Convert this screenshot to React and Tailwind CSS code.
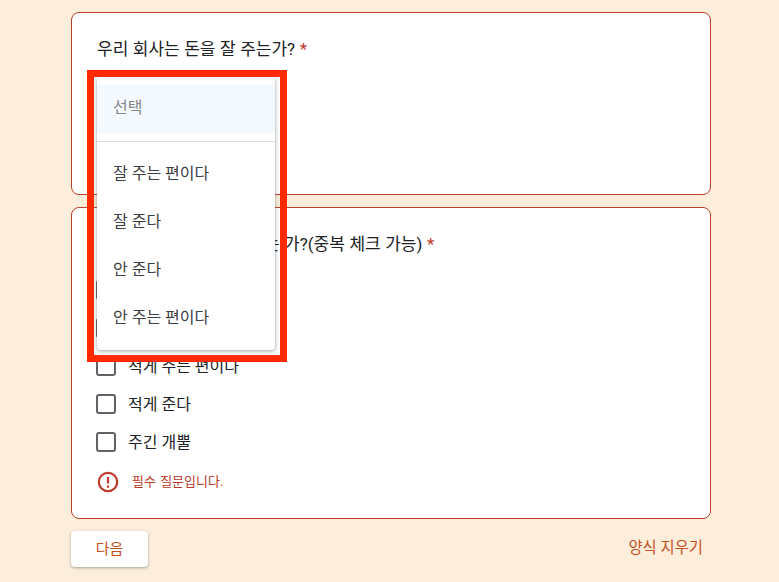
const font = { fontFamily: '"Roboto", "Noto Sans CJK KR", sans-serif' };

function Check({ label }) {
  return (
    <div className="flex h-[38px] items-center gap-[12px]">
      <span className="h-[20px] w-[20px] rounded-[3px] border-2 border-[#5f6368]" />
      <span className="pt-[1px] text-[16px] text-[#202124]">{label}</span>
    </div>
  );
}

function MenuItem({ children }) {
  return <div className="flex h-[48px] items-center px-[16px] pt-[1px] text-[16px] text-[#3c4043]">{children}</div>;
}

export default function App() {
  return (
    <div className="relative h-[582px] w-[779px] overflow-hidden bg-[#fdeedb]" style={font}>
      <div className="ml-[71px] flex w-[640px] flex-col pt-[12px]">
        <section className="h-[183px] rounded-[8px] border border-[#bd3f2c] bg-white pl-[25px] pt-[24px]">
          <h2 className="text-[17px] leading-[24px] font-normal text-[#202124] [word-spacing:0.3px]">
            우리 회사는 돈을 잘 주는가? <span className="text-[#c0392b]">*</span>
          </h2>
        </section>
        <section className="mt-[12px] h-[312px] rounded-[8px] border border-[#bd3f2c] bg-white pl-[24px] pt-[24px]">
          <h2 className="pl-[1px] text-[17px] leading-[24px] font-normal text-[#202124] [word-spacing:0.3px]">
            <span className="[word-spacing:3px]">우리 회사는 돈을 잘</span> 주는 가?(중복 체크 가능) <span className="text-[#c0392b]">*</span>
          </h2>
          <div className="mt-[15px] flex flex-col">
            <Check label="많이 준다" />
            <Check label="많이 주는 편이다" />
            <Check label="적게 주는 편이다" />
            <Check label="적게 준다" />
            <Check label="주긴 개뿔" />
          </div>
          <div className="mt-[10px] flex items-center gap-[13px] pl-[1px] text-[13px] text-[#b83a2b] [word-spacing:1px]">
            <svg width="22" height="22" viewBox="0 0 22 22" fill="none" aria-hidden="true">
              <circle cx="11" cy="11" r="9.2" stroke="#c0392b" strokeWidth="2.2" />
              <path d="M11 6v6.5" stroke="#c0392b" strokeWidth="2.2" />
              <path d="M11 14.5v2.2" stroke="#c0392b" strokeWidth="2.2" />
            </svg>
            <span>필수 질문입니다.</span>
          </div>
        </section>
        <div className="mt-[12px] flex items-center justify-between">
          <button className="h-[36px] w-[77px] rounded-[4px] bg-white text-[15px] text-[#c5501f] shadow-[0_1px_3px_rgba(60,64,67,0.45)]">
            다음
          </button>
          <span className="pr-[8px] text-[15.4px] text-[#c5501f]">양식 지우기</span>
        </div>
      </div>

      <div className="absolute left-[87px] top-[70px] h-[292px] w-[200px] border-[7px] border-[#ff2a00]">
        <div className="ml-[3px] h-[273px] w-[178px] rounded-[4px] bg-white shadow-[0_1px_4px_rgba(60,64,67,0.5)]">
          <div className="pt-[8px]">
            <div className="flex h-[48px] items-center bg-[#f4f9fd] px-[16px] pb-[3px] text-[16px] text-[#80868b]">선택</div>
          </div>
          <div className="mt-[8px] border-t border-[#dadce0] pt-[7px]">
            <MenuItem>잘 주는 편이다</MenuItem>
            <MenuItem>잘 준다</MenuItem>
            <MenuItem>안 준다</MenuItem>
            <MenuItem>안 주는 편이다</MenuItem>
          </div>
        </div>
      </div>
    </div>
  );
}
